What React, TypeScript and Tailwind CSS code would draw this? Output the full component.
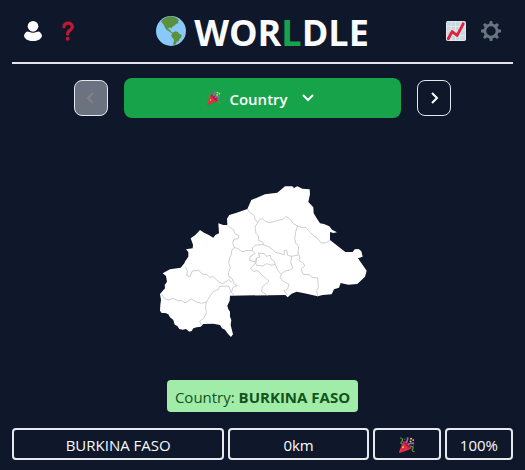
import React from "react";

const PARTY_LABEL = "Correct";

function PersonIcon() {
  return (
    <svg viewBox="0 0 54 60" className="h-5 w-[18px]" fill="#fff" aria-hidden="true">
      <circle cx="27" cy="16" r="16" />
      <path d="M8 32 C12 30 17 35 27 35 S42 30 46 32 C51 36 54 40 54 45 C52 54 41 60 27 60 S2 54 0 45 C0 40 3 36 8 32Z" />
    </svg>
  );
}

function QuestionIcon() {
  return (
    <svg viewBox="0 0 36 58" className="h-5 w-3" aria-hidden="true">
      <path
        d="M6 16 C6 2 31 2 31 17 C31 28 17 25 17 38"
        fill="none"
        stroke="#be1931"
        strokeWidth="10"
        strokeLinecap="round"
      />
      <circle cx="17" cy="52" r="6" fill="#be1931" />
    </svg>
  );
}

function GlobeIcon() {
  return (
    <svg viewBox="0 0 90 90" className="size-[30px]" aria-hidden="true">
      <circle cx="45" cy="45" r="45" fill="#88c9f9" />
      <path
        d="M17 13 C23 7 32 3 41 1 L52 2 L61 5 L66 10 L69 14 L65 16 L68 19 L65 23 L60 23 L56 29 L51 31 L47 35 L46 39 L42 34 L37 37 L39 41 L43 42 L44 46 L49 50 L53 50 L51 52 L44 50 L38 45 L32 42 L27 35 L23 26 L19 21 L16 18Z"
        fill="#5c913b"
      />
      <path
        d="M49 50 L58 46 L66 48 L69 53 L77 56 L76 64 L71 68 L69 74 L62 78 L59 85 L54 88 L51 82 L54 76 L53 69 L47 63 L46 57Z"
        fill="#5c913b"
      />
    </svg>
  );
}

function ChartIcon() {
  return (
    <svg viewBox="0 0 36 36" className="size-5" aria-hidden="true">
      <rect x="0" y="0" width="36" height="36" rx="3" fill="#e1e8ed" />
      <rect x="2" y="2" width="32" height="32" rx="1" fill="#ccd6dd" />
      <path d="M9 2V34M17 2V34M25 2V34M2 10H34M2 18H34M2 26H34" stroke="#e1e8ed" strokeWidth="2" />
      <path
        d="M4 32 L11 19 L20 26 L31 5"
        fill="none"
        stroke="#e0203c"
        strokeWidth="5"
        strokeLinecap="round"
        strokeLinejoin="round"
      />
    </svg>
  );
}

function GearIcon() {
  const teeth = [0, 45, 90, 135, 180, 225, 270, 315];
  return (
    <svg viewBox="0 0 36 36" className="size-5" aria-hidden="true">
      <circle cx="18" cy="18" r="11" fill="none" stroke="#66757f" strokeWidth="5" />
      {teeth.map((angle) => (
        <path
          key={angle}
          d="M14.5 7 L15.5 1 Q15.5 0 16.5 0 H19.5 Q20.5 0 20.5 1 L21.5 7Z"
          fill="#66757f"
          transform={`rotate(${angle} 18 18)`}
        />
      ))}
    </svg>
  );
}

function PartyIcon({ className }: { className: string }) {
  return (
    <svg viewBox="0 0 36 36" className={className} role="img" aria-label={PARTY_LABEL}>
      <path d="M10 9 C17 9 28 19 28 26 C21 29 9 34 2 36 C0 36 0 35 0 34Z" fill="#dd2e44" />
      <path d="M10 13 L4 30 L1 34 L8 20Z" fill="#ea596e" />
      <path d="M10 9 C18 10 27 18 28 26 C22 25 12 17 10 9Z" fill="#b01030" />
      <path d="M3 2 C9 3 9 7 6 10 C3 13 4 15 7 16" fill="none" stroke="#5c913b" strokeWidth="3" />
      <path d="M17 14 C14 9 23 9 19 1" fill="none" stroke="#9266cc" strokeWidth="4" />
      <path d="M20 18 C24 12 27 17 34 13" fill="none" stroke="#9266cc" strokeWidth="3.5" />
      <path d="M25 23 C29 19 34 22 31 27 C28 30 31 33 35 33" fill="none" stroke="#5c913b" strokeWidth="3" />
      <g fill="#ffcc4d">
        <circle cx="27" cy="4" r="2.2" />
        <circle cx="32" cy="7" r="2.2" />
        <circle cx="26" cy="10" r="2.2" />
        <circle cx="9" cy="23" r="2" />
      </g>
      <circle cx="13" cy="5" r="1.4" fill="#5c913b" />
      <circle cx="33" cy="18" r="1.4" fill="#9266cc" />
    </svg>
  );
}

function Chevron({ d, className }: { d: string; className: string }) {
  return (
    <svg
      viewBox="0 0 12 12"
      className={className}
      fill="none"
      stroke="currentColor"
      strokeWidth="2"
      aria-hidden="true"
    >
      <path d={d} />
    </svg>
  );
}

function CountryMap() {
  return (
    <svg viewBox="0 0 675 480" className="h-40 w-[225px]" role="img" aria-label="Country shape">
      <path
        fill="#fff"
        d="M292 87 L304 60 L345 43 L382 38 L405 19 L427 19 L432 24 L442 19 L457 26 L479 28 L480 42 L475 66 L490 82 L491 100 L500 115 L510 130 L522 132 L538 139 L546 149 L561 157 L550 159 L540 156 L540 180 L562 197 L586 216 L608 216 L614 208 L626 207 L634 214 L638 230 L624 235 L638 255 L650 272 L645 290 L622 312 L595 314 L572 309 L567 323 L552 328 L545 343 L518 345 L503 349 L470 341 L440 335 L425 341 L413 352 L406 345 L240 347 L239 362 L232 377 L235 388 L240 395 L240 410 L244 420 L242 435 L249 463 L243 471 L234 462 L225 449 L216 445 L210 435 L190 431 L160 432 L152 440 L140 442 L130 445 L125 453 L118 455 L108 447 L98 449 L88 447 L82 438 L74 434 L70 420 L60 412 L55 403 L46 399 L35 399 L30 392 L31 375 L33 360 L30 342 L45 325 L44 315 L51 305 L48 288 L38 280 L60 268 L92 263 L103 250 L106 243 L115 230 L115 216 L108 208 L128 205 L129 194 L122 175 L136 165 L150 150 L162 158 L175 164 L190 173 L196 165 L207 160 L206 145 L205 130 L220 135 L232 135 L231 116 L238 105 L260 98Z"
      />
      <g fill="none" stroke="#c3c4c9" strokeWidth="2.5" strokeLinejoin="round">
        <path d="M292 87 L300 98 L312 106 L315 118 L323 128 L330 118 L338 116 L345 124 L360 128 L380 122 L400 117 L408 109 L422 119 L430 131 L443 138 L438 152 L434 175 L438 191 L446 200 L444 219 L450 231 L447 242 L460 249 L464 258 L453 267 L460 283 L478 284 L485 292 L503 294 L505 320 L500 334 L503 349" />
        <path d="M443 138 L454 142 L468 143 L478 155 L490 166 L503 176 L513 189 L529 188 L540 180" />
        <path d="M323 128 L315 141 L318 160 L325 168 L326 181 L339 187 L340 195 L354 199 L367 208 L377 217 L390 220 L402 225 L403 212 L410 210 L413 225 L423 229 L446 225" />
        <path d="M232 135 L240 143 L250 148 L255 161 L267 167 L264 176 L252 178 L248 190 L253 202 L246 210 L243 225 L239 233 L236 250 L241 263 L235 278 L237 291 L246 295 L252 311 L262 317 L249 322 L244 338 L254 347" />
        <path d="M253 202 L263 206 L276 215 L290 212 L307 211 L308 202 L318 195 L340 194" />
        <path d="M307 211 L315 221 L300 230 L299 241 L315 245 L320 234 L330 231 L325 219 L343 221 L349 229 L361 226 L364 238 L373 244 L376 255 L383 270 L392 281" />
        <path d="M320 234 L318 249 L301 264 L310 274 L324 272 L337 286 L357 303 L347 312 L338 320 L334 334 L352 346" />
        <path d="M315 245 L320 256 L338 258 L350 251 L366 256 L376 252" />
        <path d="M425 229 L422 245 L428 265 L417 271 L410 271 L395 280 L390 292 L400 304 L417 313 L413 327 L402 332 L412 345" />
        <path d="M106 261 L112 272 L110 287 L120 291 L127 273 L145 271 L159 283 L170 283 L179 292 L190 290 L205 305 L218 311 L236 299 L246 307" />
        <path d="M34 342 L45 357 L56 360 L70 355 L86 363 L95 361 L105 369 L124 357 L137 365 L154 370 L169 366 L182 345 L191 334 L205 329 L209 319 L236 318 L244 338" />
        <path d="M169 366 L167 380 L169 400 L160 416 L149 424 L154 436" />
      </g>
    </svg>
  );
}

const CELL =
  "flex h-8 items-center justify-center rounded border-2 border-[#e8e9ee] pt-0.5 text-[15px]";

export default function App() {
  return (
    <div className="min-h-screen bg-[#0f172a] px-3 pb-2.5 font-['Open_Sans','Noto_Sans',sans-serif] text-slate-50">
      <header className="flex h-16 items-center justify-between border-b-2 border-[#e5e3f1] px-3">
        <div className="flex w-16 items-center gap-5">
          <button type="button" aria-label="Profile">
            <PersonIcon />
          </button>
          <button type="button" aria-label="How to play">
            <QuestionIcon />
          </button>
        </div>
        <h1 className="flex items-center gap-2 text-[36px] leading-10 font-bold">
          <GlobeIcon />
          <span className="pt-1">
            WOR<span className="text-[#16a34a]">L</span>DLE
          </span>
        </h1>
        <div className="flex w-16 items-center justify-end gap-[15px]">
          <button type="button" aria-label="Stats">
            <ChartIcon />
          </button>
          <button type="button" aria-label="Settings">
            <GearIcon />
          </button>
        </div>
      </header>

      <main>
        <nav className="mt-3.5 flex items-center justify-center gap-4 px-[62px]">
          <button
            type="button"
            disabled
            aria-label="Previous round"
            className="flex h-9 w-[34px] items-center justify-center rounded-lg border border-slate-200 bg-[#6b7280] text-[#85827f]"
          >
            <Chevron d="M8 1 L3 6 L8 11" className="size-3" />
          </button>
          <button
            type="button"
            className="flex h-10 grow items-center justify-center rounded-lg bg-[#16a34a] pr-1 text-[15px] font-semibold text-white"
          >
            <PartyIcon className="size-3.5" />
            <span className="ml-2 pt-0.5">Country</span>
            <Chevron d="M1 3 L6 8 L11 3" className="ml-3.5 size-3" />
          </button>
          <button
            type="button"
            aria-label="Next round"
            className="flex h-9 w-[34px] items-center justify-center rounded-lg border border-slate-200 text-white"
          >
            <Chevron d="M4 1 L9 6 L4 11" className="size-3" />
          </button>
        </nav>

        <div className="mt-[62px] flex justify-center">
          <CountryMap />
        </div>

        <div className="mt-10 flex justify-center">
          <p className="rounded bg-[#a0eca8] px-2 pt-[5px] pb-[3px] text-[15px] leading-6 text-[#14531d]">
            Country: <strong className="font-bold">BURKINA FASO</strong>
          </p>
        </div>

        <div className="mt-4 grid grid-cols-7 gap-1">
          <div className={`${CELL} col-span-3`}>BURKINA FASO</div>
          <div className={`${CELL} col-span-2`}>0km</div>
          <div className={CELL}>
            <PartyIcon className="size-4" />
          </div>
          <div className={CELL}>100%</div>
        </div>
      </main>
    </div>
  );
}
